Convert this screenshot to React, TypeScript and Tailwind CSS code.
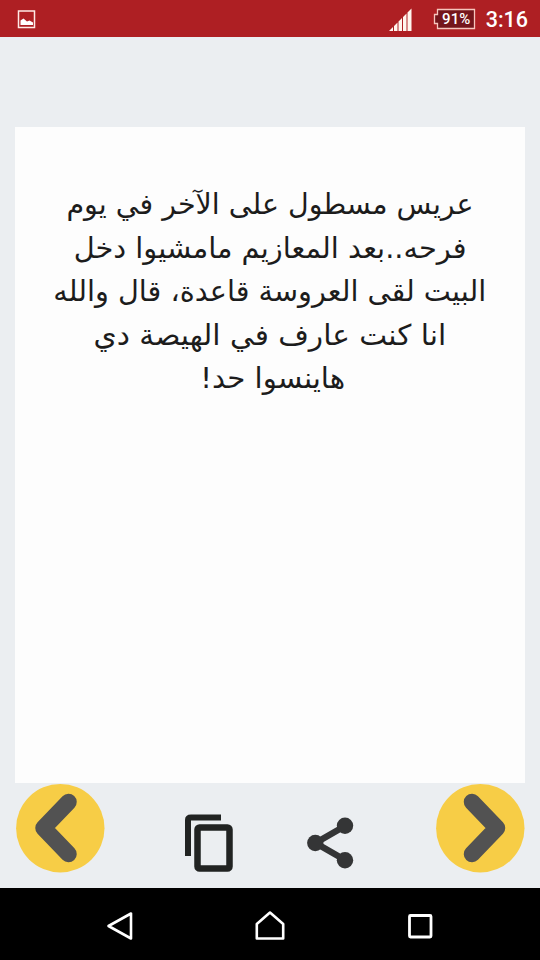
const lines = [
  { text: "عريس مسطول على الآخر في يوم", className: "" },
  { text: "فرحه..بعد المعازيم مامشيوا دخل", className: "scale-x-[1.012]" },
  { text: "البيت لقى العروسة قاعدة، قال والله", className: "scale-x-[1.008]" },
  { text: "انا كنت عارف في الهيصة دي", className: "scale-x-[1.038]" },
  { text: "هاينسوا حد!", className: "translate-x-[3px] scale-x-[1.025]" },
];

const StatusBar = () => (
  <header className="flex h-[37px] items-center justify-between bg-[#ae1f23] pl-[17px] pr-3 text-white">
    <svg className="mt-0.5 h-[19px] w-[19px]" viewBox="0 0 19 19" fill="none">
      <rect x="1.5" y="1" width="16" height="16.5" stroke="#ffeae6" strokeWidth="1.5" />
      <path d="M3.5 15V10.5L6.5 8.5L10 11.5L12.5 10.5L16 12.5V15Z" fill="#fff" />
    </svg>
    <div className="flex items-center">
      <svg className="mt-0.5 h-6 w-6" viewBox="0 0 24 24" fill="#fff5ee">
        <path d="M1 23L5 19V23ZM6 18L9.5 14.5V23H6ZM10.5 13.5L14 10V23H10.5ZM15 9L18.5 5.5V23H15ZM19.5 4.5L23.5 .5V23H19.5Z" />
      </svg>
      <div className="relative ml-[21px] flex h-[22px] w-[43px] items-center justify-center">
        <svg className="absolute inset-0" width="43" height="22" viewBox="0 0 43 22">
          <path
            d="M4.5 1.5H41.5V20.5H4.5V15.5H1.5V6.5H4.5Z"
            fill="#74151b"
            stroke="#f6c5bd"
            strokeWidth="1.3"
          />
        </svg>
        <span className="relative ml-1 mt-px font-['Roboto',sans-serif] text-[15px] font-medium leading-none">
          91%
        </span>
      </div>
      <span className="ml-2.5 mt-[3px] font-['Roboto',sans-serif] text-[21.5px] font-medium leading-none">
        3:16
      </span>
    </div>
  </header>
);

const ArrowButton = ({ label, path }: { label: string; path: string }) => (
  <button
    aria-label={label}
    className="flex size-[89px] items-center justify-center"
  >
    <svg width="89" height="89" viewBox="0 0 89 89" fill="none">
      <circle cx="44.3" cy="44.2" r="44.2" fill="#f7cd46" />
      <path
        d={path}
        stroke="#525252"
        strokeWidth="16.5"
        strokeLinecap="round"
        strokeLinejoin="round"
      />
    </svg>
  </button>
);

const Toolbar = () => (
  <div className="flex h-[105px] items-start px-[15.5px] pt-px">
    <ArrowButton label="Previous" path="M52.5 18L27.5 44L52.5 70" />
    <button aria-label="Copy" className="ml-20 mt-[29px]">
      <svg width="50" height="60" viewBox="0 0 50 60" fill="none" stroke="#212322">
        <path d="M36 4.5H6Q3 4.5 3 7V43" strokeWidth="6" />
        <rect x="12.5" y="14.5" width="32" height="41" rx="2" strokeWidth="6.5" />
      </svg>
    </button>
    <button aria-label="Share" className="ml-[72px] mt-[33px]">
      <svg width="48" height="52" viewBox="0 0 48 52" fill="#343536">
        <path d="M38 9L8.5 26L38 43" fill="none" stroke="#343536" strokeWidth="6.5" />
        <circle cx="8.3" cy="26" r="8.2" />
        <circle cx="38" cy="8.7" r="8.2" />
        <circle cx="38" cy="43.3" r="8.2" />
      </svg>
    </button>
    <div className="ml-auto">
      <ArrowButton label="Next" path="M36 18L61 44L36 70" />
    </div>
  </div>
);

const NavigationBar = () => (
  <nav className="flex h-[72px] items-center justify-between bg-black px-[105px] pt-1">
    <svg width="30" height="32" viewBox="0 0 30 32" fill="none">
      <path d="M3.5 16L26 3.5V28.5Z" stroke="#fff" strokeWidth="2.6" strokeLinejoin="round" />
    </svg>
    <svg width="32" height="32" viewBox="0 0 32 32" fill="none">
      <path d="M2.8 28.5V14L16 2.5L29.2 14V28.5Z" stroke="#fff" strokeWidth="2.6" strokeLinejoin="round" />
    </svg>
    <svg width="30" height="32" viewBox="0 0 30 32" fill="none">
      <rect x="4.5" y="5.5" width="21.5" height="21.5" rx="1" stroke="#fff" strokeWidth="2.8" />
    </svg>
  </nav>
);

const App = () => {
  return (
    <div className="flex h-[960px] w-[540px] flex-col overflow-hidden bg-[#ebeef1]">
      <StatusBar />
      <main className="mx-[15px] mt-[90px] h-[656px] bg-[#fdfdfd] pt-14">
        <div
          dir="rtl"
          className="flex flex-col items-center font-['DejaVu_Sans',sans-serif] text-[28.5px] leading-[43.6px] text-[#1c1c1c]"
        >
          {lines.map(({ text, className }) => (
            <p key={text} className={`whitespace-nowrap ${className}`}>
              {text}
            </p>
          ))}
        </div>
      </main>
      <Toolbar />
      <NavigationBar />
    </div>
  );
};

export default App;
